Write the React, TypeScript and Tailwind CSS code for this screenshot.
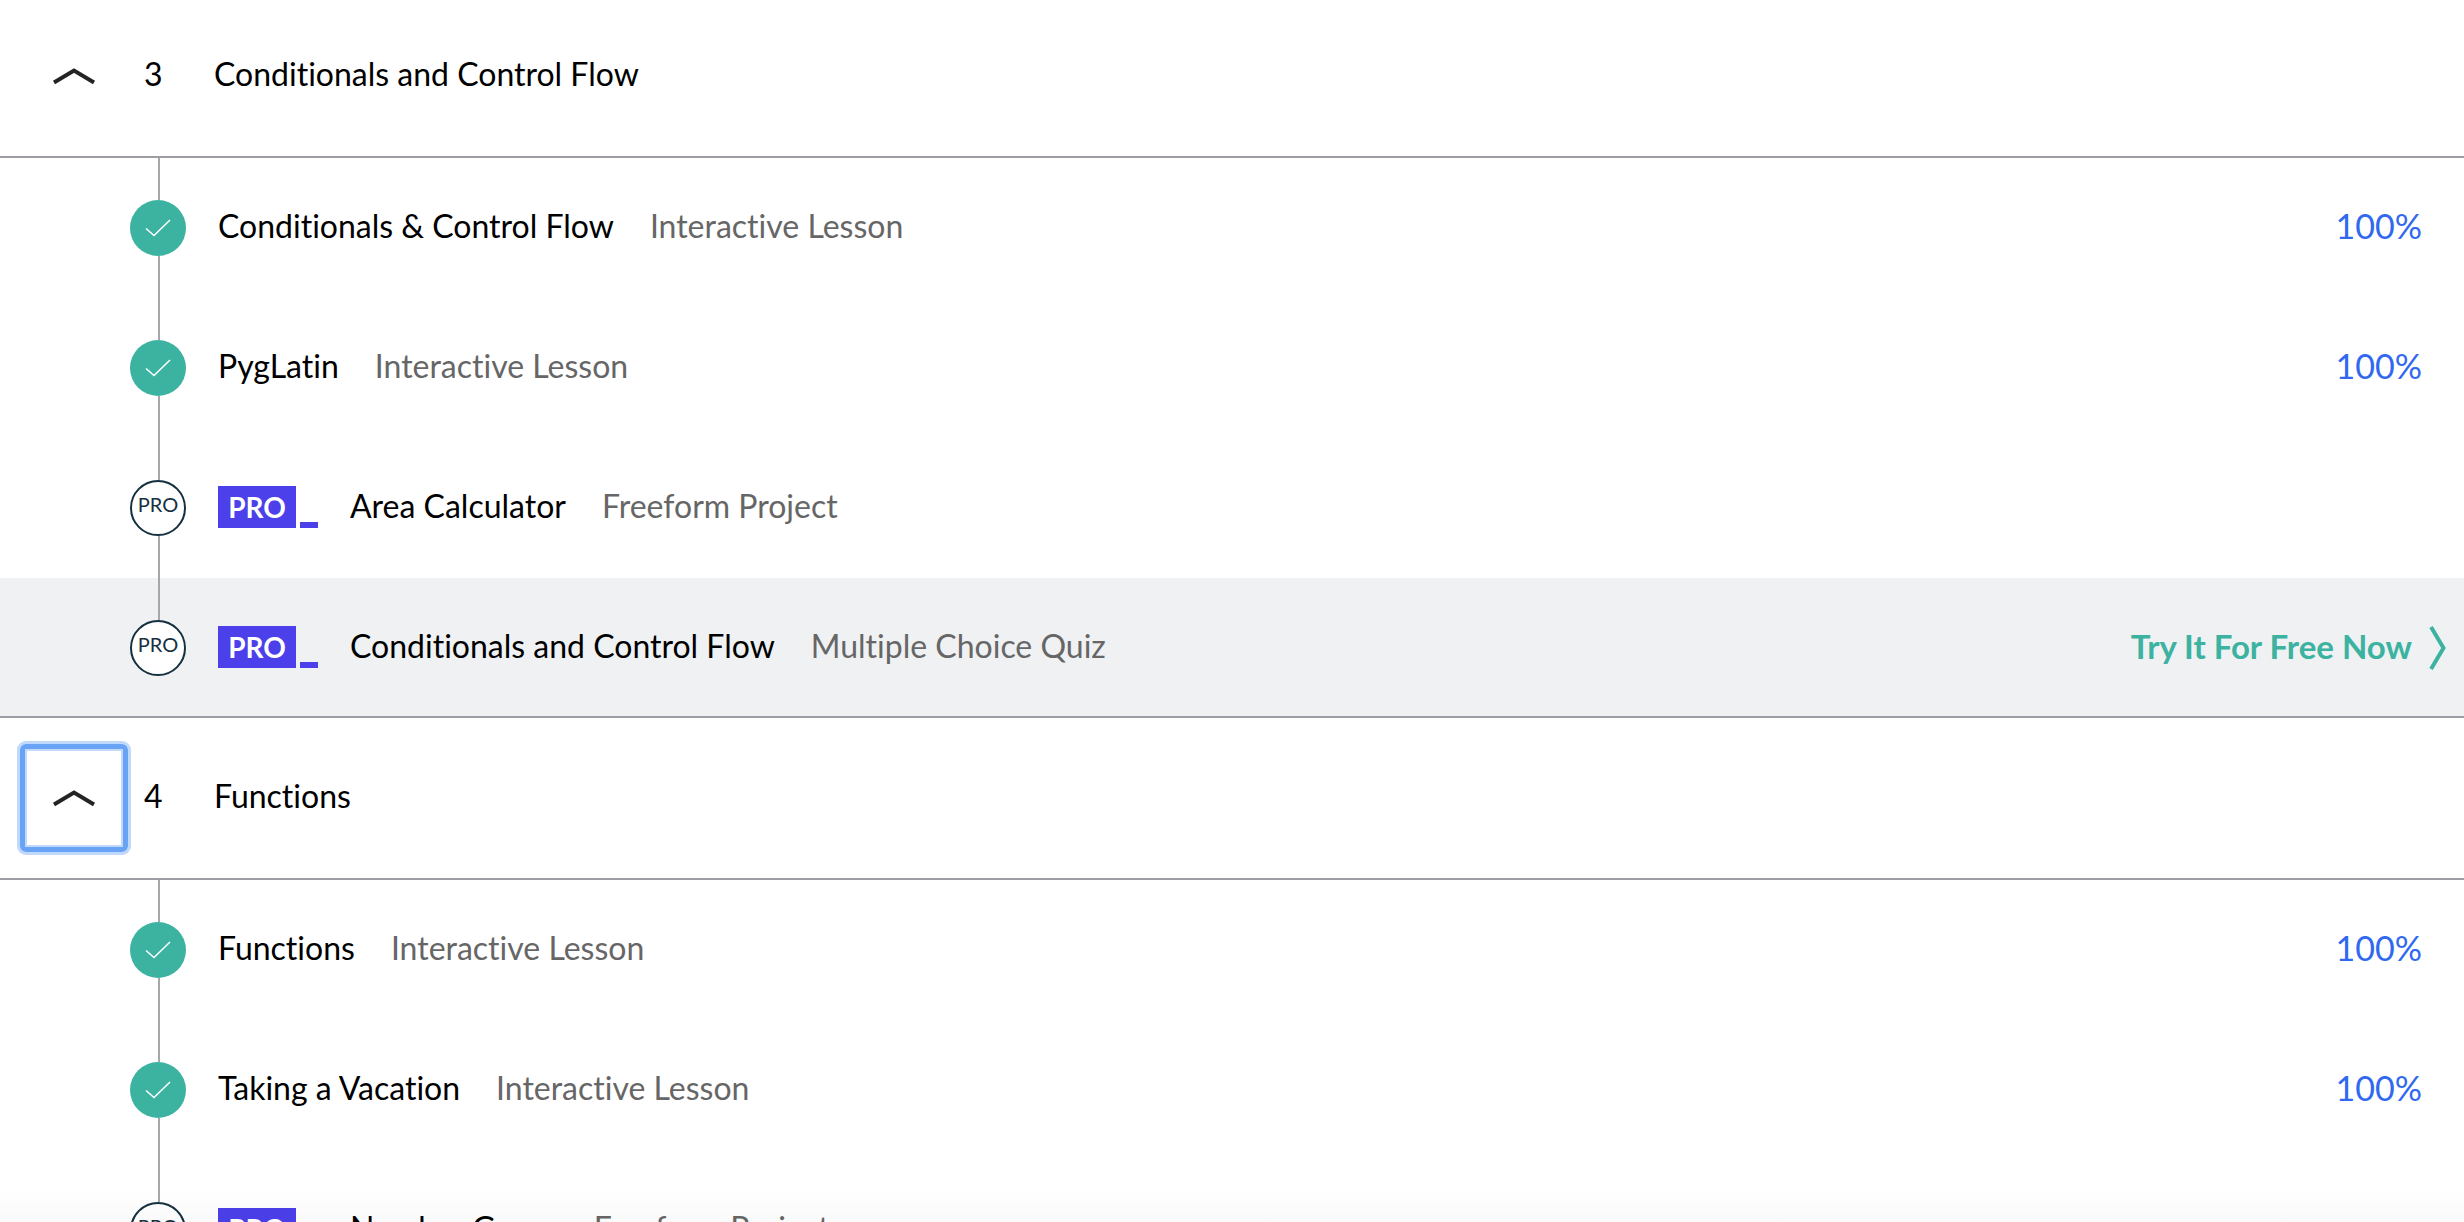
import React, { useState } from 'react';

type Item = {
  title: string;
  kind: string;
  pro?: boolean;
  progress?: string;
  highlighted?: boolean;
};

type Unit = {
  number: number;
  title: string;
  focused?: boolean;
  items: Item[];
};

const units: Unit[] = [
  {
    number: 3,
    title: 'Conditionals and Control Flow',
    items: [
      { title: 'Conditionals & Control Flow', kind: 'Interactive Lesson', progress: '100%' },
      { title: 'PygLatin', kind: 'Interactive Lesson', progress: '100%' },
      { title: 'Area Calculator', kind: 'Freeform Project', pro: true },
      { title: 'Conditionals and Control Flow', kind: 'Multiple Choice Quiz', pro: true, highlighted: true },
    ],
  },
  {
    number: 4,
    title: 'Functions',
    focused: true,
    items: [
      { title: 'Functions', kind: 'Interactive Lesson', progress: '100%' },
      { title: 'Taking a Vacation', kind: 'Interactive Lesson', progress: '100%' },
      { title: 'Number Guess', kind: 'Freeform Project', pro: true },
    ],
  },
];

function StatusMarker({ pro }: { pro?: boolean }) {
  if (pro) {
    return (
      <span className="flex h-14 w-14 shrink-0 items-center justify-center rounded-full border-2 border-[#15303f] bg-white pb-2 text-[20px] leading-none text-[#15303f]">
        PRO
      </span>
    );
  }
  return (
    <span className="h-14 w-14 shrink-0 rounded-full bg-[#3cb2a0]">
      <svg viewBox="0 0 56 56" className="h-14 w-14" fill="none" stroke="white" strokeWidth="1.5" role="img" aria-label="Completed">
        <path d="M16 28.5 L24 35.5 L40 20" />
      </svg>
    </span>
  );
}

function ProBadge() {
  return (
    <span className="flex items-end gap-1">
      <span className="flex h-[42px] w-[78px] items-center justify-center bg-[#4b40ea] text-[28px] font-bold leading-none text-white">
        PRO
      </span>
      <span className="h-[6px] w-[18px] bg-[#4b40ea]" />
    </span>
  );
}

function ItemRow({ item, last }: { item: Item; last: boolean }) {
  return (
    <li className={item.highlighted ? 'flex h-[140px] items-center bg-[#eff1f3] pl-[130px]' : 'flex h-[140px] items-center pl-[130px]'}>
      <div className="flex h-full w-14 shrink-0 flex-col items-center">
        <span className="w-[3px] flex-1 border-r-2 border-[#a6a7ab]" />
        <StatusMarker pro={item.pro} />
        <span className={last ? 'w-[3px] flex-1' : 'w-[3px] flex-1 border-r-2 border-[#a6a7ab]'} />
      </div>
      <div className="ml-8 flex flex-1 items-center gap-8 whitespace-nowrap pb-0.5">
        {item.pro && <ProBadge />}
        <span className="flex items-center gap-9 pb-0.5">
          <a href="#" className="text-black">{item.title}</a>
          <span className="text-[#666666]">{item.kind}</span>
        </span>
      </div>
      {item.progress && <span className="mr-[42px] pb-1 text-[34px] leading-10 text-[#3069f0]">{item.progress}</span>}
      {item.highlighted && (
        <a href="#" className="mr-4 flex items-center gap-4 whitespace-nowrap text-[33px] font-bold leading-10 text-[#3cb2a0]">
          <span className="pb-1">Try It For Free Now</span>
          <svg viewBox="0 0 20 48" className="h-12 w-5" fill="none" stroke="currentColor" strokeWidth="4" aria-hidden="true">
            <path d="M3 3 L15.5 24 L3 45" />
          </svg>
        </a>
      )}
    </li>
  );
}

function UnitSection({ unit }: { unit: Unit }) {
  const [open, setOpen] = useState(true);
  return (
    <section>
      <header className="relative -mt-0.5 flex h-[164px] items-center border-y-2 border-[#9d9da3] bg-white pl-5">
        <button
          type="button"
          aria-expanded={open}
          aria-label={`Toggle ${unit.title}`}
          onClick={() => setOpen(!open)}
          className={
            unit.focused
              ? 'flex h-[108px] w-[108px] items-center justify-center rounded-md border-[5px] border-[#69a3f6] shadow-[0_0_0_3px_#bfd8fb,inset_0_0_0_2px_#c3d9f9] outline-none'
              : 'flex h-[108px] w-[108px] items-center justify-center rounded-md border-[5px] border-transparent outline-none'
          }
        >
          <svg viewBox="0 0 48 24" className={open ? 'h-6 w-12' : 'h-6 w-12 rotate-180'} fill="none" stroke="#242424" strokeWidth="4" aria-hidden="true">
            <path d="M4 18.5 L24 6.5 L44 18.5" />
          </svg>
        </button>
        <h2 className="ml-4 flex pb-1">
          <span className="w-[70px]">{unit.number}</span>
          <span>{unit.title}</span>
        </h2>
      </header>
      {open && (
        <ul>
          {unit.items.map((item, i) => (
            <ItemRow key={item.title} item={item} last={item.highlighted === true && i === unit.items.length - 1} />
          ))}
        </ul>
      )}
    </section>
  );
}

export default function App() {
  return (
    <main className="relative h-screen overflow-hidden bg-white font-['Lato',sans-serif] text-[32px] leading-10 text-black [font-variant-ligatures:none]">
      <div className="-mt-1.5">
        {units.map((unit) => (
          <UnitSection key={unit.number} unit={unit} />
        ))}
      </div>
      <div className="pointer-events-none absolute inset-x-0 bottom-0 h-9 bg-linear-to-b from-transparent to-black/2" />
    </main>
  );
}
